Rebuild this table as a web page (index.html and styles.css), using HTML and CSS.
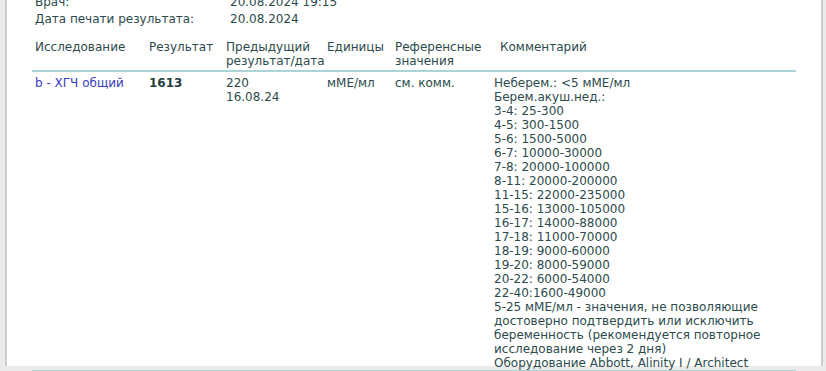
FILE: index.html
```html
<!DOCTYPE html>
<html lang="ru">
<head>
<meta charset="utf-8">
<link rel="stylesheet" href="styles.css">
</head>
<body>
<div class="page">
  <div class="info">
    <div class="info-row"><span class="info-label">Врач:</span><span>20.08.2024 19:15</span></div>
    <div class="info-row"><span class="info-label">Дата печати результата:</span><span>20.08.2024</span></div>
  </div>
  <table class="results">
    <thead>
      <tr>
        <th class="c1">Исследование</th>
        <th class="c2">Результат</th>
        <th class="c3">Предыдущий<br>результат/дата</th>
        <th class="c4">Единицы</th>
        <th class="c5">Референсные<br>значения</th>
        <th class="c6">Комментарий</th>
      </tr>
    </thead>
    <tbody>
      <tr>
        <td class="c1"><span class="test">b - ХГЧ общий</span></td>
        <td class="c2"><b>1613</b></td>
        <td class="c3">220<br>16.08.24</td>
        <td class="c4">мМЕ/мл</td>
        <td class="c5">см. комм.</td>
        <td class="c6">Неберем.: &lt;5 мМЕ/мл<br>Берем.акуш.нед.:<br>3-4: 25-300<br>4-5: 300-1500<br>5-6: 1500-5000<br>6-7: 10000-30000<br>7-8: 20000-100000<br>8-11: 20000-200000<br>11-15: 22000-235000<br>15-16: 13000-105000<br>16-17: 14000-88000<br>17-18: 11000-70000<br>18-19: 9000-60000<br>19-20: 8000-59000<br>20-22: 6000-54000<br>22-40:1600-49000<br>5-25 мМЕ/мл - значения, не позволяющие достоверно подтвердить или исключить беременность (рекомендуется повторное исследование через 2 дня)<br>Оборудование Abbott, Alinity I / Architect</td>
      </tr>
    </tbody>
  </table>
</div>
</body>
</html>
```
FILE: styles.css
```css
html, body {
  margin: 0;
  padding: 0;
  height: 100%;
  overflow: hidden;
}
body {
  background: #ebebeb;
  font-family: "DejaVu Sans", sans-serif;
  font-size: 12px;
  line-height: 14px;
  color: #2c4a4c;
}
.page {
  margin-left: 5px;
  height: 100%;
  background: #fff;
  border-left: 2px solid #cdcdcd;
  border-right: 2px solid #cdcdcd;
  padding-left: 28px;
  box-sizing: border-box;
  width: 818px;
}
.info {
  margin-top: -5px;
  display: flex;
  flex-direction: column;
  gap: 3px;
}
.info-row {
  display: flex;
}
.info-label {
  width: 195px;
}
.results {
  margin-top: 14px;
  margin-left: -3px;
  border-collapse: collapse;
  width: 764px;
  table-layout: fixed;
}
.results th {
  font-weight: normal;
  text-align: left;
  vertical-align: top;
  white-space: nowrap;
  padding: 0 3px 2px 3px;
  border-bottom: 2px solid #a9d5d9;
}
.results td {
  vertical-align: top;
  padding: 4px 3px 0 3px;
  border-bottom: 2px solid #a9d5d9;
}
.c1 { width: 108px; }
.c2 { width: 71px; }
.c3 { width: 95px; }
.c4 { width: 62px; }
.c5 { width: 93px; }
.results th.c6 { padding-left: 9px; }
.test { color: #3a3ac0; white-space: nowrap; }
.results b { color: #1f3d3f; }
```
